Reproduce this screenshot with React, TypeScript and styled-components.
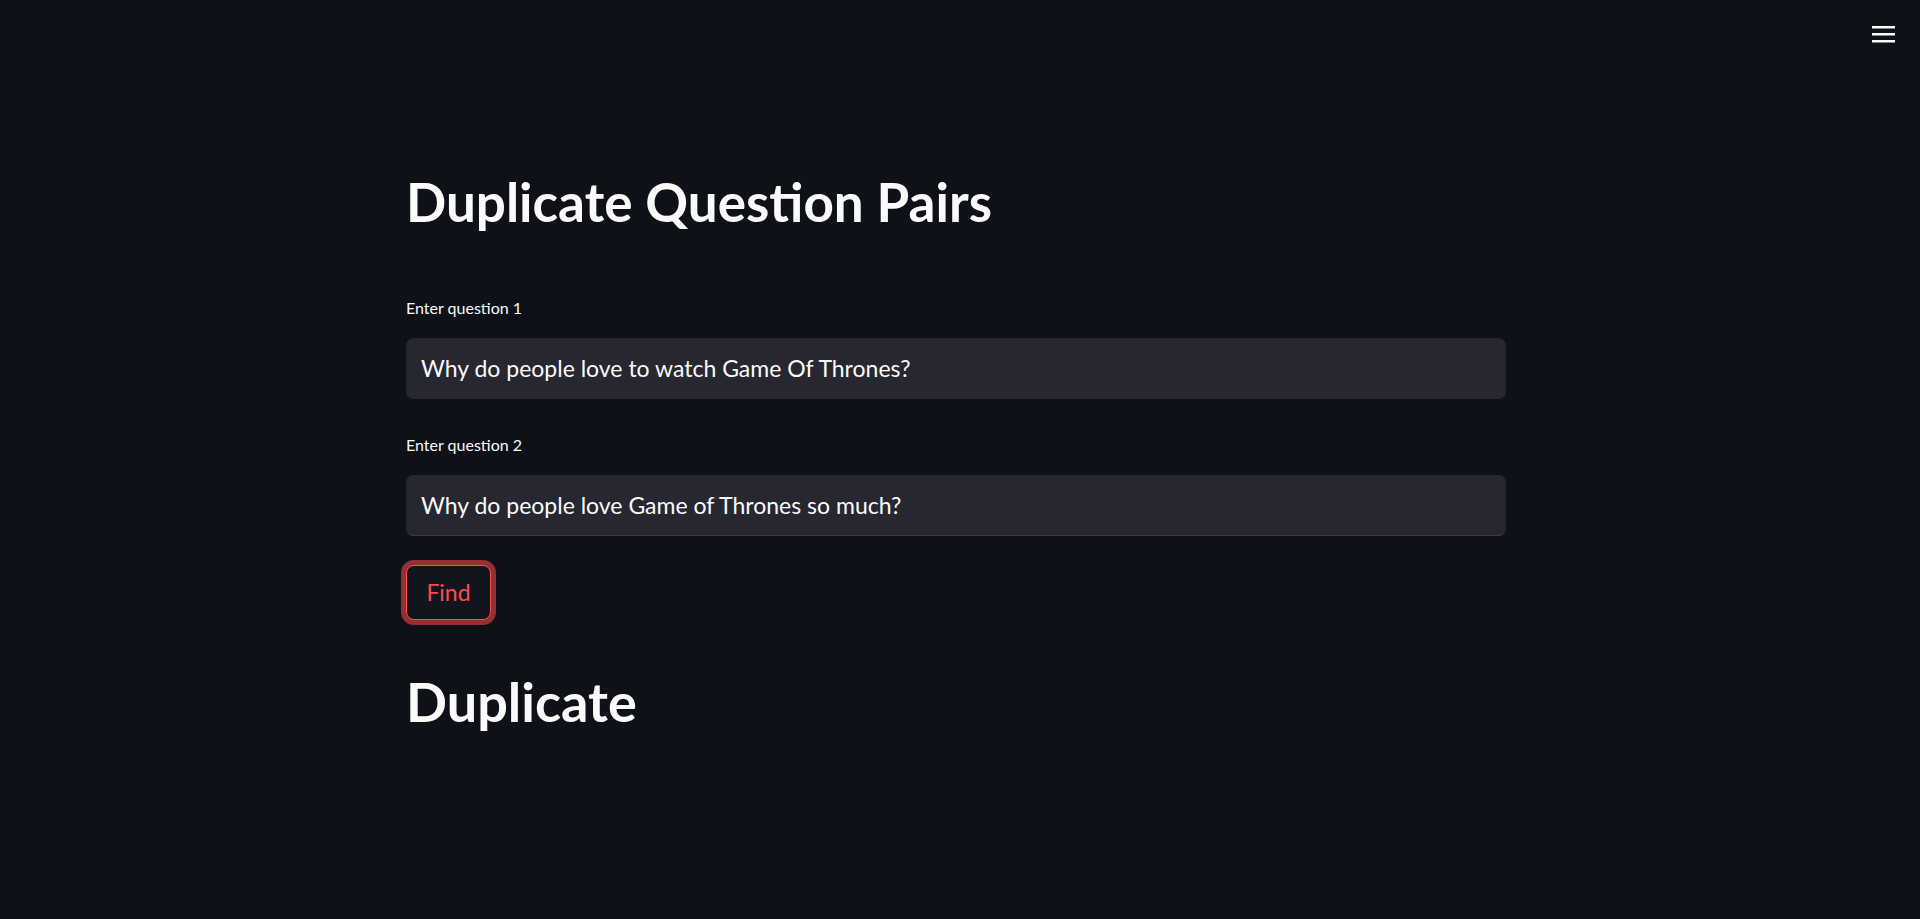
import React, { useState } from "react";
import styled, { createGlobalStyle } from "styled-components";

const GlobalStyle = createGlobalStyle`
  html, body {
    margin: 0;
    padding: 0;
    background-color: #0e1117;
    color: #fafafa;
    font-family: Lato, "Noto Sans", sans-serif;
  }
  * {
    box-sizing: border-box;
  }
`;

const Page = styled.div`
  min-height: 919px;
  background-color: #0e1117;
`;

const Header = styled.header`
  display: flex;
  justify-content: flex-end;
  padding: 22px 24px 0 0;
  height: 60px;
`;

const MenuButton = styled.button`
  background: none;
  border: none;
  padding: 0;
  width: 26px;
  height: 24px;
  cursor: pointer;
  display: flex;
  align-items: center;
  justify-content: center;
`;

const Main = styled.main`
  width: 1100px;
  margin-left: calc(50% - 554px);
  padding-top: 110px;
  display: flex;
  flex-direction: column;
`;

const Title = styled.h1`
  font-size: 53px;
  font-weight: 700;
  line-height: 1.2;
  margin: 0 0 63px;
`;

const Field = styled.div`
  display: flex;
  flex-direction: column;
  margin-bottom: 35px;
`;

const Label = styled.label`
  font-size: 16px;
  line-height: 22px;
  margin-bottom: 19px;
`;

const Input = styled.input<{ $underline?: boolean }>`
  height: 61px;
  width: 100%;
  background-color: #262730;
  border: 1px solid #262730;
  border-bottom-color: ${(p) => (p.$underline ? "#3a3b46" : "#262730")};
  border-radius: 7px;
  padding: 0 14px;
  color: #fafafa;
  font-family: inherit;
  font-size: 23px;
  outline: none;
`;

const FindButton = styled.button`
  align-self: flex-start;
  margin-top: -6px;
  width: 85px;
  height: 55px;
  background-color: #12151d;
  border: 1px solid #ff4b4b;
  border-radius: 8px;
  box-shadow: 0 0 0 5px rgba(255, 75, 75, 0.55);
  color: #ff4b4b;
  font-family: inherit;
  font-size: 23px;
  cursor: pointer;
`;

const Result = styled.h2`
  font-size: 54px;
  font-weight: 700;
  line-height: 1.2;
  margin: 50px 0 0;
`;

const MenuIcon = () => (
  <svg width="23" height="17" viewBox="0 0 23 17">
    <rect x="0" y="0" width="23" height="2.5" fill="#fafafa" />
    <rect x="0" y="7" width="23" height="2.5" fill="#fafafa" />
    <rect x="0" y="14" width="23" height="2.5" fill="#fafafa" />
  </svg>
);

const App = () => {
  const [q1, setQ1] = useState("Why do people love to watch Game Of Thrones?");
  const [q2, setQ2] = useState("Why do people love Game of Thrones so much?");

  return (
    <Page>
      <GlobalStyle />
      <Header>
        <MenuButton aria-label="menu">
          <MenuIcon />
        </MenuButton>
      </Header>
      <Main>
        <Title>Duplicate Question Pairs</Title>
        <Field>
          <Label>Enter question 1</Label>
          <Input value={q1} onChange={(e) => setQ1(e.target.value)} />
        </Field>
        <Field>
          <Label>Enter question 2</Label>
          <Input $underline value={q2} onChange={(e) => setQ2(e.target.value)} />
        </Field>
        <FindButton>Find</FindButton>
        <Result>Duplicate</Result>
      </Main>
    </Page>
  );
};

export default App;
